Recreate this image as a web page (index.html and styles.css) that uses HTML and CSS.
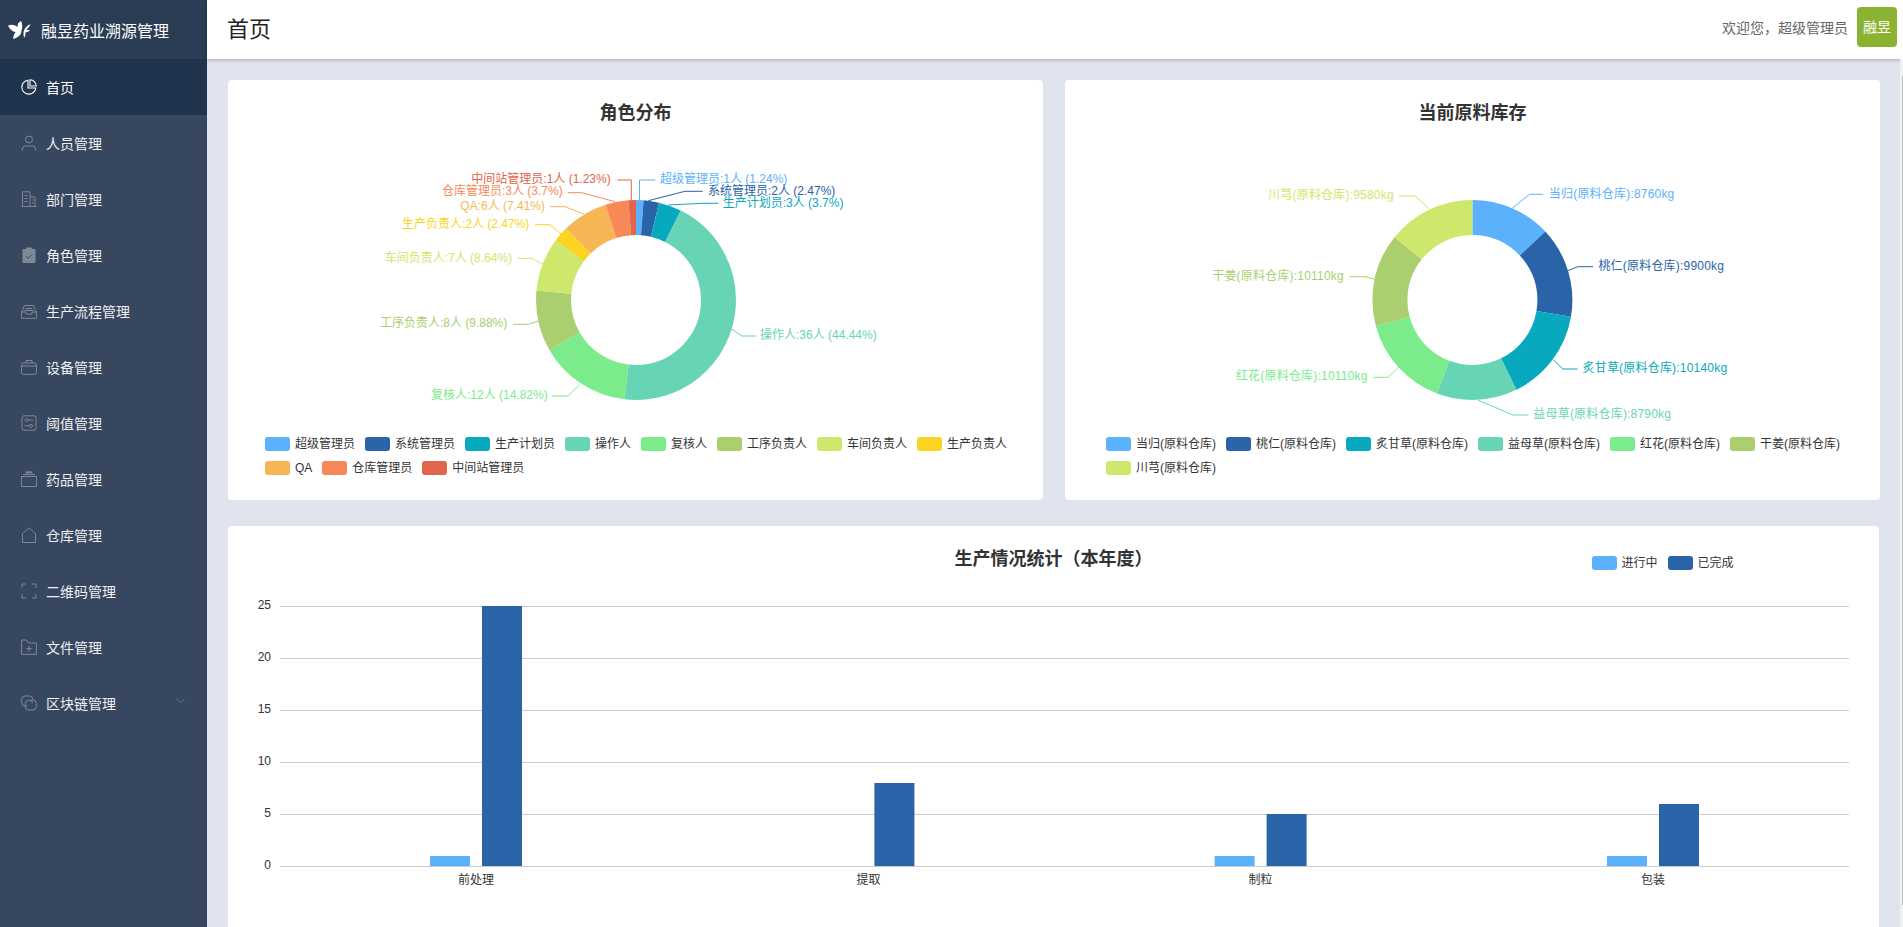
FILE: index.html
```html
<!DOCTYPE html>
<html lang="zh-CN">
<head>
    <meta charset="utf-8">
    <title>融昱药业溯源管理</title>
    <link rel="stylesheet" href="styles.css">
</head>
<body>
    <aside class="sidebar">
        <div class="brand">
            <svg class="brand-logo" viewBox="0 0 24 20">
                <path d="M0 5.500C4 3.500 8 5 10 7C9.500 4 11 2 13.500 .5C15 3 15.500 7 14 11C14 15 10 18 5.500 19.500C5.500 16 6.500 13.500 8 12C5 12 2 9 0 5.500z"/>
                <path d="M23.500 4C20 5 17.500 8 16.500 11C16 13.500 16 16 17 18C18 16.500 18.500 14.500 18 12.500C20 12.500 22 11.500 23 10C21.500 9.800 20 10 19 10.200C20.500 8.500 22.500 6.500 23.500 4z"/>
            </svg>
            <span>融昱药业溯源管理</span>
        </div>
        <nav class="menu">
            <a class="menu-item active">
                <svg class="icon" viewBox="0 0 16 16"><path d="M7 1.200A7 7 0 1 0 14.800 9H7z"/><path d="M9 .7A6.500 6.500 0 0 1 15.300 7H9z"/></svg>
                <span>首页</span>
            </a>
            <a class="menu-item">
                <svg class="icon" viewBox="0 0 16 16"><circle cx="8" cy="4.500" r="3.500"/><path d="M1.500 15.500V14a3 3 0 0 1 3-3h7a3 3 0 0 1 3 3v1.500"/></svg>
                <span>人员管理</span>
            </a>
            <a class="menu-item">
                <svg class="icon" viewBox="0 0 16 16"><path d="M.5 15.500h15M1.500 15.500V.8H9v14.700M9 6h5v9.500M3.500 4.500h3M3.500 7.500h3M3.500 10.500h3M11 9h1.500M11 12h1.500"/></svg>
                <span>部门管理</span>
            </a>
            <a class="menu-item">
                <svg class="icon" viewBox="0 0 16 16"><rect class="solid" x="1.500" y="2" width="13" height="14" rx="1"/><rect class="solid" x="5" y=".5" width="6" height="3"/><path class="cut" d="M5 9l2.300 2.300L11 7.500"/></svg>
                <span>角色管理</span>
            </a>
            <a class="menu-item">
                <svg class="icon" viewBox="0 0 16 16"><path d="M.6 9l2.900-6.500h9L15.400 9v6.300H.6zM.6 9H5v2.200h6V9h4.400M4.500 5.500h7M3.500 7.500h9"/></svg>
                <span>生产流程管理</span>
            </a>
            <a class="menu-item">
                <svg class="icon" viewBox="0 0 16 16"><rect x=".6" y="4" width="14.800" height="11.300" rx="1.500"/><path d="M5 4V1.500h6V4M.6 7h14.800"/></svg>
                <span>设备管理</span>
            </a>
            <a class="menu-item">
                <svg class="icon" viewBox="0 0 16 16"><rect x="1" y=".8" width="14" height="14.400" rx="2"/><circle cx="5.500" cy="5" r="1.500"/><circle cx="10" cy="10.800" r="1.500"/><path d="M7 5h5.500M3.500 10.800h5"/></svg>
                <span>阈值管理</span>
            </a>
            <a class="menu-item">
                <svg class="icon" viewBox="0 0 16 16"><rect x=".6" y="5.500" width="14.800" height="10"/><path d="M2 3.500h12"/><path class="thick" d="M4.500 1.300h7"/></svg>
                <span>药品管理</span>
            </a>
            <a class="menu-item">
                <svg class="icon" viewBox="0 0 16 16"><path d="M1.500 15.500V6.800L8 .8l6.500 6v8.700z"/></svg>
                <span>仓库管理</span>
            </a>
            <a class="menu-item">
                <svg class="icon" viewBox="0 0 16 16"><path d="M1 5V1h4M11 1h4v4M15 11v4h-4M5 15H1v-4"/></svg>
                <span>二维码管理</span>
            </a>
            <a class="menu-item">
                <svg class="icon" viewBox="0 0 16 16"><path d="M.6 15.300V1h5l1.500 3h8.300v11.300zM8 7v5.500M5.200 9.700h5.600"/></svg>
                <span>文件管理</span>
            </a>
            <a class="menu-item">
                <svg class="icon" viewBox="0 0 16 16"><path d="M6.500 11H4A3.300 3.300 0 0 1 .7 7.700V4.300A3.300 3.300 0 0 1 4 1h4.500a3.300 3.300 0 0 1 3.300 3.300"/><path d="M9.500 5H12a3.300 3.300 0 0 1 3.300 3.300v3.400A3.300 3.300 0 0 1 12 15H7.500a3.300 3.300 0 0 1-3.300-3.300V8.800a3.300 3.300 0 0 1 3.300-3.300H9A2.500 2.500 0 0 1 11.500 8"/></svg>
                <span>区块链管理</span>
                <svg class="chevron" viewBox="0 0 10 6"><path d="M.5.5L5 5 9.500.5"/></svg>
            </a>
        </nav>
    </aside>

    <div class="page">
        <header class="topbar">
            <h1>首页</h1>
            <div class="user">
                <span class="welcome">欢迎您，超级管理员</span>
                <div class="avatar">融昱</div>
            </div>
        </header>

        <main class="content">
            <div class="pie-row">
                <section class="card">
                    <h2 class="card-title">角色分布</h2>
                    <svg class="pie-chart" viewBox="0 0 815 306">
                        <g class="donut" transform="rotate(-90 408 176)">
                            <circle cx="408" cy="176" r="82.5" pathLength="81" stroke="#5bb1fc" stroke-dasharray="1 80"/>
                            <circle cx="408" cy="176" r="82.5" pathLength="81" stroke="#2963a8" stroke-dasharray="2 79" stroke-dashoffset="-1"/>
                            <circle cx="408" cy="176" r="82.5" pathLength="81" stroke="#08a8be" stroke-dasharray="3 78" stroke-dashoffset="-3"/>
                            <circle cx="408" cy="176" r="82.5" pathLength="81" stroke="#67d5b5" stroke-dasharray="36 45" stroke-dashoffset="-6"/>
                            <circle cx="408" cy="176" r="82.5" pathLength="81" stroke="#7beb8c" stroke-dasharray="12 69" stroke-dashoffset="-42"/>
                            <circle cx="408" cy="176" r="82.5" pathLength="81" stroke="#abce6f" stroke-dasharray="8 73" stroke-dashoffset="-54"/>
                            <circle cx="408" cy="176" r="82.5" pathLength="81" stroke="#cde86a" stroke-dasharray="7 74" stroke-dashoffset="-62"/>
                            <circle cx="408" cy="176" r="82.5" pathLength="81" stroke="#fad420" stroke-dasharray="2 79" stroke-dashoffset="-69"/>
                            <circle cx="408" cy="176" r="82.5" pathLength="81" stroke="#f7b654" stroke-dasharray="6 75" stroke-dashoffset="-71"/>
                            <circle cx="408" cy="176" r="82.5" pathLength="81" stroke="#f98858" stroke-dasharray="3 78" stroke-dashoffset="-77"/>
                            <circle cx="408" cy="176" r="82.5" pathLength="81" stroke="#e0654b" stroke-dasharray="1 80" stroke-dashoffset="-80"/>
                        </g>
                        <g class="labels">
                            <g class="c1"><polyline points="411.5,76 411.5,56 427.3,56"/><text x="432" y="59">超级管理员:1人 (1.24%)</text></g>
                            <g class="c2"><polyline points="420.3,76.7 457,67.3 474.7,67.3"/><text x="480" y="71">系统管理员:2人 (2.47%)</text></g>
                            <g class="c3"><polyline points="440.3,81 475,79.3 490.3,79.3"/><text x="494.7" y="83">生产计划员:3人 (3.7%)</text></g>
                            <g class="c4"><polyline points="503.7,205 513.7,212 528,212"/><text x="532" y="214.6">操作人:36人 (44.44%)</text></g>
                            <g class="c5"><polyline points="352,260.3 340.3,272 323.7,272"/><text class="end" x="319.7" y="275.3">复核人:12人 (14.82%)</text></g>
                            <g class="c6"><polyline points="310.3,197 300.3,200.3 285.3,200.3"/><text class="end" x="279.3" y="203">工序负责人:8人 (9.88%)</text></g>
                            <g class="c7"><polyline points="314.7,140 303.7,134.3 289.3,134.3"/><text class="end" x="284" y="138">车间负责人:7人 (8.64%)</text></g>
                            <g class="c8"><polyline points="333,110 322,100.7 307,100.7"/><text class="end" x="301.3" y="104">生产负责人:2人 (2.47%)</text></g>
                            <g class="c9"><polyline points="356,90 337,82.7 322,82.7"/><text class="end" x="317" y="86">QA:6人 (7.41%)</text></g>
                            <g class="c10"><polyline points="387,77.7 353.7,68.7 339.7,68.7"/><text class="end" x="334.7" y="71">仓库管理员:3人 (3.7%)</text></g>
                            <g class="c11"><polyline points="403.3,76 403.3,56 389.3,56"/><text class="end" x="382.7" y="59">中间站管理员:1人 (1.23%)</text></g>
                        </g>
                    </svg>
                    <ul class="legend">
                        <li><i class="c1"></i>超级管理员</li>
                        <li><i class="c2"></i>系统管理员</li>
                        <li><i class="c3"></i>生产计划员</li>
                        <li><i class="c4"></i>操作人</li>
                        <li><i class="c5"></i>复核人</li>
                        <li><i class="c6"></i>工序负责人</li>
                        <li><i class="c7"></i>车间负责人</li>
                        <li><i class="c8"></i>生产负责人</li>
                        <li><i class="c9"></i>QA</li>
                        <li><i class="c10"></i>仓库管理员</li>
                        <li><i class="c11"></i>中间站管理员</li>
                    </ul>
                </section>

                <section class="card">
                    <h2 class="card-title">当前原料库存</h2>
                    <svg class="pie-chart" viewBox="0 0 815 306">
                        <g class="donut" transform="rotate(-90 407.4 176)">
                            <circle cx="407.4" cy="176" r="82.5" pathLength="67390" stroke="#5bb1fc" stroke-dasharray="8760 58630"/>
                            <circle cx="407.4" cy="176" r="82.5" pathLength="67390" stroke="#2963a8" stroke-dasharray="9900 57490" stroke-dashoffset="-8760"/>
                            <circle cx="407.4" cy="176" r="82.5" pathLength="67390" stroke="#08a8be" stroke-dasharray="10140 57250" stroke-dashoffset="-18660"/>
                            <circle cx="407.4" cy="176" r="82.5" pathLength="67390" stroke="#67d5b5" stroke-dasharray="8790 58600" stroke-dashoffset="-28800"/>
                            <circle cx="407.4" cy="176" r="82.5" pathLength="67390" stroke="#7beb8c" stroke-dasharray="10110 57280" stroke-dashoffset="-37590"/>
                            <circle cx="407.4" cy="176" r="82.5" pathLength="67390" stroke="#abce6f" stroke-dasharray="10110 57280" stroke-dashoffset="-47700"/>
                            <circle cx="407.4" cy="176" r="82.5" pathLength="67390" stroke="#cde86a" stroke-dasharray="9580 57810" stroke-dashoffset="-57810"/>
                        </g>
                        <g class="labels labels-stock">
                            <g class="c1"><polyline points="447.2,84.3 464.6,70.3 478.3,70.3"/><text x="483.8" y="74.3">当归(原料仓库):8760kg</text></g>
                            <g class="c2"><polyline points="502.7,146.7 512.7,142.7 528.2,142.7"/><text x="533.4" y="146.3">桃仁(原料仓库):9900kg</text></g>
                            <g class="c3"><polyline points="488.7,236 497.9,245 512.7,245"/><text x="517.5" y="248">炙甘草(原料仓库):10140kg</text></g>
                            <g class="c4"><polyline points="412.8,276 448,291 463.5,291"/><text x="468.3" y="294">益母草(原料仓库):8790kg</text></g>
                            <g class="c5"><polyline points="334,242.7 323,253.3 308,253.3"/><text class="end" x="302.6" y="256.3">红花(原料仓库):10110kg</text></g>
                            <g class="c6"><polyline points="310,155.3 300,152.7 284.4,152.7"/><text class="end" x="278.9" y="156">干姜(原料仓库):10110kg</text></g>
                            <g class="c7"><polyline points="364.7,85.3 350,72 334,72"/><text class="end" x="328.8" y="75.3">川芎(原料仓库):9580kg</text></g>
                        </g>
                    </svg>
                    <ul class="legend legend-stock">
                        <li><i class="c1"></i>当归(原料仓库)</li>
                        <li><i class="c2"></i>桃仁(原料仓库)</li>
                        <li><i class="c3"></i>炙甘草(原料仓库)</li>
                        <li><i class="c4"></i>益母草(原料仓库)</li>
                        <li><i class="c5"></i>红花(原料仓库)</li>
                        <li><i class="c6"></i>干姜(原料仓库)</li>
                        <li><i class="c7"></i>川芎(原料仓库)</li>
                    </ul>
                </section>
            </div>

            <section class="card card-bar">
                <div class="bar-head">
                    <h2 class="card-title">生产情况统计（本年度）</h2>
                    <ul class="legend legend-bar">
                        <li><i class="c1"></i>进行中</li>
                        <li><i class="c2"></i>已完成</li>
                    </ul>
                </div>
                <svg class="bar-chart" viewBox="0 0 1651 326">
                    <g class="grid">
                        <line x1="52" x2="1621" y1="36.5" y2="36.5"/>
                        <line x1="52" x2="1621" y1="88.5" y2="88.5"/>
                        <line x1="52" x2="1621" y1="140.5" y2="140.5"/>
                        <line x1="52" x2="1621" y1="192.5" y2="192.5"/>
                        <line x1="52" x2="1621" y1="244.5" y2="244.5"/>
                        <line x1="52" x2="1621" y1="296.5" y2="296.5"/>
                    </g>
                    <g class="y-axis">
                        <text x="43" y="39">25</text>
                        <text x="43" y="91">20</text>
                        <text x="43" y="143">15</text>
                        <text x="43" y="195">10</text>
                        <text x="43" y="247">5</text>
                        <text x="43" y="299">0</text>
                    </g>
                    <g class="bars-doing">
                        <rect x="202" y="286" width="40" height="10"/>
                        <rect x="986.6" y="286" width="40" height="10"/>
                        <rect x="1379" y="286" width="40" height="10"/>
                    </g>
                    <g class="bars-done">
                        <rect x="254" y="36" width="40" height="260"/>
                        <rect x="646.4" y="213" width="40" height="83"/>
                        <rect x="1038.6" y="244" width="40" height="52"/>
                        <rect x="1431" y="234" width="40" height="62"/>
                    </g>
                    <g class="x-axis">
                        <text x="248" y="313.5">前处理</text>
                        <text x="640.4" y="313.5">提取</text>
                        <text x="1032.6" y="313.5">制粒</text>
                        <text x="1425" y="313.5">包装</text>
                    </g>
                </svg>
            </section>
        </main>

        <div class="scrollbar"><div class="scrollbar-thumb"></div></div>
    </div>
</body>
</html>
```
FILE: styles.css
```css
* {
    box-sizing: border-box;
}
body {
    display: flex;
    height: 100vh;
    margin: 0;
    overflow: hidden;
    background-color: #e0e4ee;
    font-family: "Liberation Sans", "Noto Sans CJK SC", sans-serif;
    font-size: 14px;
    color: #333;
}

/* sidebar */
.sidebar {
    flex: none;
    width: 207px;
    background-color: #37475f;
}
.brand {
    display: flex;
    align-items: center;
    height: 59px;
    padding-left: 8px;
    gap: 10px;
    background-color: #2a3d54;
    color: #fff;
    font-size: 16px;
}
.brand-logo {
    width: 23px;
    height: 20px;
    margin-top: 1px;
    fill: #fff;
}
.menu-item {
    display: flex;
    align-items: center;
    height: 56px;
    padding-left: 21px;
    color: #eef0f3;
}
.menu-item.active {
    background-color: #21344e;
    color: #fff;
}
.icon {
    flex: none;
    width: 16px;
    height: 16px;
    margin-right: 9px;
    fill: none;
    stroke: #7f8896;
    stroke-width: 1;
}
.active .icon {
    stroke: #fff;
    stroke-width: 1.1;
}
.icon .solid {
    fill: #7f8896;
    stroke: none;
}
.icon .cut {
    stroke: #37475f;
}
.icon .thick {
    stroke-width: 2;
}
.chevron {
    width: 9px;
    height: 6px;
    margin-left: auto;
    margin-right: 22px;
    margin-top: -4px;
    fill: none;
    stroke: #6f7b8c;
}

/* top bar */
.page {
    position: relative;
    display: flex;
    flex-direction: column;
    flex: 1;
    min-width: 0;
}
.topbar {
    position: relative;
    display: flex;
    flex: none;
    align-items: center;
    justify-content: space-between;
    height: 59px;
    padding: 0 6px 5px 20px;
    background-color: #fff;
    box-shadow: 0 1px 4px rgba(0, 0, 0, 0.25);
}
.topbar h1 {
    margin: 0;
    font-size: 22px;
    font-weight: normal;
    color: #222;
}
.user {
    display: flex;
    align-items: center;
    gap: 9px;
}
.welcome {
    color: #666;
}
.avatar {
    width: 40px;
    height: 40px;
    border-radius: 4px;
    background-color: #8bb332;
    color: #fff;
    line-height: 40px;
    text-align: center;
}

/* content */
.content {
    flex: 1;
    padding: 21px 24px 0 21px;
    overflow: hidden;
}
.scrollbar {
    position: absolute;
    top: 59px;
    right: 0;
    bottom: 0;
    width: 3px;
    padding-top: 17px;
    background-color: #f1f1f1;
}
.scrollbar-thumb {
    width: 1px;
    height: 829px;
    margin-left: auto;
    background-color: #bbb;
}
.pie-row {
    display: grid;
    grid-template-columns: 815px 1fr;
    gap: 22px;
    margin-bottom: 26px;
}
.card {
    height: 420px;
    padding-top: 20px;
    border-radius: 4px;
    background-color: #fff;
}
.card-bar {
    height: 406px;
    border-radius: 4px 4px 0 0;
}
.card-title {
    height: 24px;
    margin: 0;
    font-size: 18px;
    line-height: 26px;
    font-weight: bold;
    color: #333;
    text-align: center;
}

/* charts */
.pie-chart {
    display: block;
    width: 815px;
    height: 306px;
    margin-bottom: 7px;
    overflow: visible;
}
.donut circle {
    fill: none;
    stroke-width: 35;
}
.labels text {
    font-size: 12px;
    stroke: none;
}
.labels polyline {
    fill: none;
}
.labels text.end {
    text-anchor: end;
}
.labels-stock text {
    letter-spacing: 0.2px;
}
.labels .c1 { fill: #5bb1fc; stroke: #5bb1fc; }
.labels .c2 { fill: #2963a8; stroke: #2963a8; }
.labels .c3 { fill: #08a8be; stroke: #08a8be; }
.labels .c4 { fill: #67d5b5; stroke: #67d5b5; }
.labels .c5 { fill: #7beb8c; stroke: #7beb8c; }
.labels .c6 { fill: #abce6f; stroke: #abce6f; }
.labels .c7 { fill: #cde86a; stroke: #cde86a; }
.labels .c8 { fill: #fad420; stroke: #fad420; }
.labels .c9 { fill: #f7b654; stroke: #f7b654; }
.labels .c10 { fill: #f98858; stroke: #f98858; }
.labels .c11 { fill: #e0654b; stroke: #e0654b; }
.labels g polyline {
    fill: none;
}

.legend {
    display: flex;
    flex-wrap: wrap;
    gap: 10px;
    width: 745px;
    margin: 0 0 0 37px;
    padding: 0;
    list-style: none;
    font-size: 12px;
    line-height: 14px;
    color: #333;
}
.legend-stock {
    width: 740px;
    margin-left: 41px;
}
.legend li {
    display: flex;
    align-items: center;
    gap: 5px;
}
.legend i {
    width: 25px;
    height: 14px;
    border-radius: 3px;
}
.legend .c1 { background-color: #5bb1fc; }
.legend .c2 { background-color: #2963a8; }
.legend .c3 { background-color: #08a8be; }
.legend .c4 { background-color: #67d5b5; }
.legend .c5 { background-color: #7beb8c; }
.legend .c6 { background-color: #abce6f; }
.legend .c7 { background-color: #cde86a; }
.legend .c8 { background-color: #fad420; }
.legend .c9 { background-color: #f7b654; }
.legend .c10 { background-color: #f98858; }
.legend .c11 { background-color: #e0654b; }

.bar-head {
    display: grid;
    grid-template-columns: 1fr auto 1fr;
}
.bar-head .card-title {
    grid-column: 2;
}
.legend-bar {
    width: auto;
    margin: 10px 0 0 439px;
    flex-wrap: nowrap;
}
.bar-chart {
    display: block;
    width: 1651px;
    height: 326px;
}
.grid line {
    stroke: #ccc;
}
.y-axis text,
.x-axis text {
    font-size: 12px;
    fill: #333;
}
.y-axis text {
    text-anchor: end;
}
.x-axis text {
    text-anchor: middle;
}
.bars-doing rect {
    fill: #5bb1fc;
}
.bars-done rect {
    fill: #2963a8;
}
```
